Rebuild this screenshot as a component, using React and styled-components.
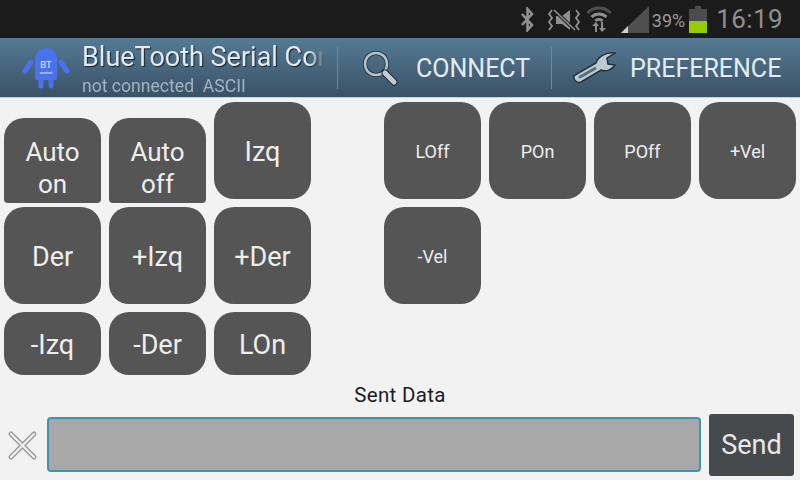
import React from "react";
import styled, { createGlobalStyle } from "styled-components";

const GlobalStyle = createGlobalStyle`
  html, body {
    margin: 0;
    padding: 0;
    width: 800px;
    height: 480px;
    overflow: hidden;
    background: #f2f2f2;
    font-family: Roboto, "Liberation Sans", sans-serif;
  }
`;

const Screen = styled.div`
  width: 800px;
  height: 480px;
  display: flex;
  flex-direction: column;
  background: #f2f2f2;
`;

const StatusBar = styled.div`
  height: 38px;
  flex: none;
  background: #1b1b1b;
  display: flex;
  align-items: center;
  justify-content: flex-end;
  padding-right: 17px;
  box-sizing: border-box;
  color: #8f8f8f;
`;

const StatusIcon = styled.svg`
  display: block;
  flex: none;
  margin-right: ${({ $gap }) => $gap}px;
  margin-top: ${({ $top }) => $top || 0}px;
`;

const Percent = styled.span`
  font-size: 18px;
  line-height: 38px;
  margin-right: 4px;
  margin-top: 3px;
  color: #999999;
`;

const Clock = styled.span`
  font-size: 26px;
  line-height: 38px;
  letter-spacing: 0.4px;
`;

const ActionBar = styled.div`
  height: 60px;
  flex: none;
  box-sizing: border-box;
  display: flex;
  align-items: center;
  background: linear-gradient(180deg, #557a94 0%, #3a5266 100%);
  border-bottom: 1px solid #ccd3d8;
`;

const Brand = styled.div`
  width: 337px;
  flex: none;
  box-sizing: border-box;
  padding-left: 22px;
  display: flex;
  align-items: center;
  gap: 12px;
`;

const Titles = styled.div`
  width: 243px;
  overflow: hidden;
  margin-top: 3px;
  -webkit-mask-image: linear-gradient(90deg, #000 93%, transparent 100%);
  mask-image: linear-gradient(90deg, #000 93%, transparent 100%);
`;

const Title = styled.div`
  font-size: 27px;
  line-height: 30px;
  color: #e3ebf0;
  white-space: nowrap;
  text-shadow: 1px 1px 1px #14212b;
`;

const Subtitle = styled.div`
  font-size: 17.6px;
  line-height: 20px;
  margin-top: 4px;
  color: #a3b3bf;
  white-space: pre;
`;

const Action = styled.div`
  height: 42px;
  box-sizing: border-box;
  width: ${({ $width }) => $width}px;
  flex: none;
  display: flex;
  align-items: center;
  border-left: 1px solid #6f8a9d;
  padding-left: ${({ $pad }) => $pad}px;
  gap: ${({ $gap }) => $gap}px;
  font-size: 25px;
  color: #e3edf3;
`;

const ActionLabel = styled.span`
  margin-top: 2px;
`;

const Graphic = styled.svg`
  display: block;
  flex: none;
  margin-top: ${({ $top }) => $top || 0}px;
`;

const Content = styled.div`
  flex: 1;
  display: flex;
  flex-direction: column;
  padding-top: 4px;
  min-height: 0;
`;

const Pads = styled.div`
  display: flex;
  padding-left: 4px;
  gap: 73px;
`;

const PadGrid = styled.div`
  display: grid;
  grid-template-columns: repeat(${({ $cols }) => $cols}, 97px);
  grid-template-rows: 101px 101px 63px;
  column-gap: 8px;
  row-gap: 4px;
  align-items: start;
`;

const Pad = styled.div`
  background: #555555;
  color: #eeeeee;
  display: flex;
  align-items: center;
  justify-content: center;
  text-align: center;
  box-sizing: border-box;
  height: ${({ $short }) => ($short ? "63px" : "97px")};
  border-radius: 20px;
  font-size: ${({ $small }) => ($small ? "18px" : "27px")};
  line-height: 32px;
  padding-top: 2px;
`;

const ClippedPad = styled(Pad)`
  height: 85px;
  margin-top: 16px;
  border-radius: 20px 20px 4px 4px;
  padding-top: 14px;
  font-size: 26px;
`;

const SentLabel = styled.div`
  margin-top: 8px;
  text-align: center;
  font-size: 20.500px;
  line-height: 24px;
  color: #1c1c1c;
  letter-spacing: 0.3px;
`;

const InputRow = styled.div`
  display: flex;
  align-items: center;
  margin-top: 7px;
  padding-left: 7px;
`;

const ClearIcon = styled.svg`
  flex: none;
  display: block;
  margin-right: 9px;
`;

const SentInput = styled.div`
  width: 654px;
  height: 55px;
  box-sizing: border-box;
  flex: none;
  margin-bottom: 1px;
  background: #a8a8a8;
  border: 2px solid #3c94ad;
  border-radius: 4px;
`;

const SendButton = styled.div`
  width: 85px;
  height: 62px;
  flex: none;
  margin-left: 8px;
  background: #464a4c;
  border-radius: 3px;
  color: #e8e8e8;
  font-size: 27px;
  display: flex;
  align-items: center;
  justify-content: center;
`;

const BluetoothIcon = () => (
  <StatusIcon $gap={14} $top={1} width="13" height="25" viewBox="0 0 13 25">
    <path d="M1 7l10 11-4.500 5V2L11 7 1 18" fill="none" stroke="#8f8f8f" strokeWidth="2.600" />
  </StatusIcon>
);

const MuteIcon = () => (
  <StatusIcon $gap={6} $top={2} width="32" height="22" viewBox="0 0 32 22">
    <path d="M8 7h6l8-6v20l-8-6H8z" fill="#8f8f8f" />
    <path d="M6 1l21 20" stroke="#1b1b1b" strokeWidth="3.500" />
    <path d="M6 1l21 20" stroke="#8f8f8f" strokeWidth="1.600" />
    <path
      d="M4 1L1 5l3 4-3 4 3 4-3 4M28 1l3 4-3 4 3 4-3 4 3 4"
      fill="none"
      stroke="#8f8f8f"
      strokeWidth="1.800"
    />
  </StatusIcon>
);

const WifiIcon = () => (
  <StatusIcon $gap={9} width="26" height="26" viewBox="0 0 26 26">
    <path d="M1.500 7a16 16 0 0 1 23 0" fill="none" stroke="#505050" strokeWidth="3" />
    <path d="M5.500 11a11 11 0 0 1 15 0" fill="none" stroke="#8f8f8f" strokeWidth="3" />
    <path d="M9.500 15a5 5 0 0 1 7 0" fill="none" stroke="#8f8f8f" strokeWidth="3" />
    <path d="M9 26v-6H6l4-4 3 4h-2v6z" fill="#8f8f8f" />
    <path d="M15 16h2v6h3l-4 4-3-4h2z" fill="#8f8f8f" />
  </StatusIcon>
);

const SignalIcon = () => (
  <StatusIcon $gap={3} width="28" height="27" viewBox="0 0 28 27">
    <path d="M28 0v27H0z" fill="#4f4f4f" />
    <path d="M0 27l7-7v7z" fill="#cfcfcf" />
  </StatusIcon>
);

const BatteryIcon = () => (
  <StatusIcon $gap={9} width="18" height="27" viewBox="0 0 18 27">
    <path d="M6 0h6v3h6v24H0V3h6z" fill="#4c4c4c" />
    <rect x="0" y="15" width="18" height="12" fill="#97cc04" />
  </StatusIcon>
);

const BotLogo = () => (
  <Graphic $top={1} width="48" height="42" viewBox="0 0 48 42">
    <path d="M13 12a11 11 0 0 1 22 0v19a2 2 0 0 1-2 2H15a2 2 0 0 1-2-2z" fill="#4a72ee" />
    <path d="M19 33v6M29 33v6" stroke="#4a72ee" strokeWidth="5" strokeLinecap="round" />
    <path d="M9 15L3 24M39 15l6 9" stroke="#4a72ee" strokeWidth="5" strokeLinecap="round" />
    <text x="24" y="21" textAnchor="middle" fontSize="9.500" fill="#e8eeff" fontFamily="Roboto, sans-serif">BT</text>
    <text x="24" y="27" textAnchor="middle" fontSize="4" fill="#ffffff" fontFamily="Roboto, sans-serif">control</text>
  </Graphic>
);

const SearchIcon = () => (
  <Graphic width="36" height="36" viewBox="0 0 36 36">
    <circle cx="14" cy="14" r="11" fill="none" stroke="#1f2d38" strokeWidth="4" />
    <circle cx="14" cy="14" r="11" fill="none" stroke="#b8c4cc" strokeWidth="2.500" />
    <path d="M23 23l9 9" stroke="#1f2d38" strokeWidth="7" strokeLinecap="round" />
    <path d="M23 23l9 9" stroke="#c2ccd3" strokeWidth="5" strokeLinecap="round" />
  </Graphic>
);

const WrenchIcon = () => (
  <Graphic width="43" height="32" viewBox="0 0 43 32">
    <path
      d="M2 23L23 11C25 5 32 0 42 1L34 6l1 6 7 1C39 18 33 20 28 18L8 30C3 32 -1 26 2 23z"
      fill="#bdc8cf"
      stroke="#22313c"
      strokeWidth="1.500"
    />
    <path d="M7 25L22 16.500" stroke="#56707f" strokeWidth="3" strokeLinecap="round" />
  </Graphic>
);

const App = () => {
  return (
    <Screen>
      <GlobalStyle />
      <StatusBar>
        <BluetoothIcon />
        <MuteIcon />
        <WifiIcon />
        <SignalIcon />
        <Percent>39%</Percent>
        <BatteryIcon />
        <Clock>16:19</Clock>
      </StatusBar>
      <ActionBar>
        <Brand>
          <BotLogo />
          <Titles>
            <Title>BlueTooth Serial Con</Title>
            <Subtitle>not connected  ASCII</Subtitle>
          </Titles>
        </Brand>
        <Action $width={214} $pad={24} $gap={18}>
          <SearchIcon />
          <ActionLabel>CONNECT</ActionLabel>
        </Action>
        <Action $width={249} $pad={21} $gap={14}>
          <WrenchIcon />
          <ActionLabel>PREFERENCE</ActionLabel>
        </Action>
      </ActionBar>
      <Content>
        <Pads>
          <PadGrid $cols={3}>
            <ClippedPad>Auto<br />on</ClippedPad>
            <ClippedPad>Auto<br />off</ClippedPad>
            <Pad>Izq</Pad>
            <Pad>Der</Pad>
            <Pad>+Izq</Pad>
            <Pad>+Der</Pad>
            <Pad $short>-Izq</Pad>
            <Pad $short>-Der</Pad>
            <Pad $short>LOn</Pad>
          </PadGrid>
          <PadGrid $cols={4}>
            <Pad $small>LOff</Pad>
            <Pad $small>POn</Pad>
            <Pad $small>POff</Pad>
            <Pad $small>+Vel</Pad>
            <Pad $small>-Vel</Pad>
          </PadGrid>
        </Pads>
        <SentLabel>Sent Data</SentLabel>
        <InputRow>
          <ClearIcon width="31" height="31" viewBox="0 0 31 31">
            <path d="M4 4l23 23M27 4L4 27" stroke="#9a9a9a" strokeWidth="5" strokeLinecap="round" />
            <path d="M4 4l23 23M27 4L4 27" stroke="#f2f2f2" strokeWidth="2.200" strokeLinecap="round" />
          </ClearIcon>
          <SentInput />
          <SendButton>Send</SendButton>
        </InputRow>
      </Content>
    </Screen>
  );
};

export default App;
